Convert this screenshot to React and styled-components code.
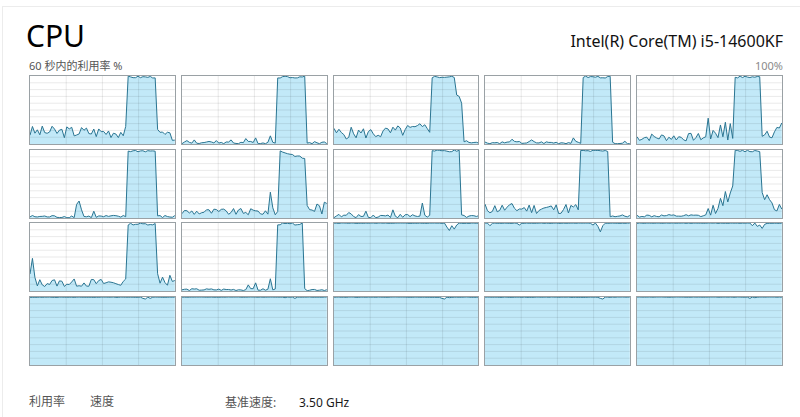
import styled, { createGlobalStyle } from "styled-components";

const GlobalStyle = createGlobalStyle`
  html, body {
    margin: 0;
    padding: 0;
    background: #ffffff;
    overflow: hidden;
  }
  body {
    font-family: "Segoe UI", "Noto Sans", "Noto Sans CJK SC", sans-serif;
    color: #1a1a1a;
  }
`;

const Page = styled.div`
  width: 800px;
  height: 417px;
  padding: 6px 0 0 2px;
  box-sizing: border-box;
  overflow: hidden;
`;

const Panel = styled.div`
  border-top: 1px solid #ececec;
  border-left: 1px solid #ececec;
  background: #ffffff;
  padding: 9px 17px 0 26px;
  height: 100%;
  box-sizing: border-box;
`;

const Header = styled.div`
  display: flex;
  justify-content: space-between;
  align-items: baseline;
  height: 40px;
`;

const Title = styled.h1`
  margin: 0 0 0 -3px;
  font-size: 30px;
  font-weight: 400;
  line-height: 40px;
  color: #000;
`;

const Model = styled.div`
  font-size: 16px;
  line-height: 22px;
  color: #111;
`;

const SubHeader = styled.div`
  display: flex;
  justify-content: space-between;
  font-size: 11px;
  line-height: 14px;
  color: #555;
  margin-top: 3px;
  margin-bottom: 2px;
`;

const Muted = styled.span`
  color: #8a8a8a;
`;

const Grid = styled.div`
  display: grid;
  grid-template-columns: repeat(5, 1fr);
  grid-auto-rows: 70px;
  column-gap: 5px;
  row-gap: 3.7px;
`;

const Cell = styled.div`
  border: 1px solid #9aa1a5;
  background: #ffffff;
  overflow: hidden;

  svg {
    display: block;
    width: 100%;
    height: 100%;
  }
`;

const Stats = styled.div`
  display: flex;
  margin-top: 28px;
`;

const StatBlock = styled.div`
  width: ${(p) => p.w}px;
  flex: none;
`;

const Label = styled.div`
  font-size: 12px;
  line-height: 16px;
  color: #555;
`;

const BigValue = styled.div`
  font-size: 22px;
  line-height: 28px;
  color: #1a1a1a;
`;

const InfoTable = styled.div`
  display: grid;
  grid-template-columns: 74px auto;
  font-size: 12px;
  line-height: 17px;
  color: #555;
`;

const InfoValue = styled.span`
  color: #1a1a1a;
`;

// deterministic noise so the graphs stay the same every render
function rng(seed) {
  let s = seed * 9301 + 49297;
  return () => {
    s = (s * 9301 + 49297) % 233280;
    return s / 233280;
  };
}

const N = 60;

function series(spec, seed) {
  const r = rng(seed);
  const out = [];
  for (let i = 0; i < N; i++) {
    let v;
    if (spec.full) {
      v = 100 - r() * (spec.jitter ?? 0.6);
    } else if (i < spec.hi[0]) {
      let base = spec.base;
      let noise = spec.noise;
      if (spec.ramp && i >= spec.ramp[0]) {
        base += ((i - spec.ramp[0]) / (spec.hi[0] - spec.ramp[0])) * spec.ramp[1];
        noise = spec.rampNoise ?? noise;
      }
      v = base + (r() - 0.5) * 2 * noise;
    } else if (i < spec.hi[1]) {
      v = 97 + r() * 3 - (spec.slope ? ((i - spec.hi[0]) / (spec.hi[1] - spec.hi[0])) * spec.slope : 0);
    } else {
      const t = (i - spec.hi[1]) / (N - spec.hi[1]);
      const post = spec.post * (1 - t * (spec.decay ?? 0));
      v = post + (r() - 0.5) * 2 * (spec.postNoise ?? spec.noise);
    }
    out.push(v);
  }
  (spec.spikes || []).forEach(([i, v]) => (out[i] = v));
  (spec.dips || []).forEach(([i, d]) => (out[i] = 100 - d));
  return out.map((v) => Math.max(0.5, Math.min(100, v)));
}

const specs = [
  { base: 18, noise: 9, hi: [40, 52], post: 16, postNoise: 6, decay: 0.5 },
  { base: 2, noise: 2, hi: [39, 51], post: 2, spikes: [[2, 5], [5, 6], [14, 5], [20, 6], [26, 8], [30, 9], [36, 12]] },
  { base: 16, noise: 9, ramp: [20, 8], hi: [40, 50], post: 3, postNoise: 2, spikes: [[50, 72], [51, 70], [52, 60]] },
  { base: 2, noise: 2, hi: [40, 52], post: 2, spikes: [[11, 7], [19, 6], [36, 9]] },
  { base: 10, noise: 6, hi: [40, 51], post: 20, postNoise: 12, spikes: [[29, 38], [31, 20], [34, 28], [36, 32], [38, 30]] },
  { base: 2, noise: 2, hi: [40, 52], post: 2, spikes: [[19, 20], [20, 25], [21, 12], [26, 10]] },
  { base: 9, noise: 5, hi: [40, 51], post: 15, postNoise: 10, slope: 12, spikes: [[36, 38], [37, 15]] },
  { base: 3, noise: 3, hi: [40, 52], post: 2, spikes: [[6, 8], [13, 10], [24, 12], [36, 22]] },
  { base: 14, noise: 8, hi: [39, 51], post: 3, postNoise: 2 },
  { base: 3, noise: 2, ramp: [28, 40], rampNoise: 10, hi: [40, 51], post: 38, postNoise: 9, decay: 0.8 },
  { base: 12, noise: 6, hi: [40, 52], post: 22, postNoise: 12, decay: 0.4, spikes: [[0, 25], [1, 48], [2, 20]] },
  { base: 2, noise: 1.5, hi: [39, 50], post: 2, spikes: [[27, 9], [30, 12], [36, 18]] },
  { full: true, dips: [[46, 6], [47, 11], [48, 4], [49, 9], [50, 3]] },
  { full: true, dips: [[2, 4], [14, 3], [44, 3], [46, 5], [47, 13], [48, 4]] },
  { full: true, dips: [[47, 4], [49, 5], [50, 3], [51, 8], [52, 2]] },
  { full: true, dips: [[46, 2], [47, 3], [49, 2]] },
  { full: true, jitter: 0.4, dips: [[42, 1], [46, 2]] },
  { full: true, dips: [[44, 2], [45, 3], [47, 1]] },
  { full: true, dips: [[47, 2], [48, 3]] },
  { full: true, jitter: 0.4, dips: [[46, 2], [48, 1]] },
];

const LINE = "#2a7592";
const FILL = "#c2e9f8";
const GRID = "rgba(0, 0, 0, 0.085)";

function CoreGraph({ data }) {
  const pts = data.map((v, i) => `${((i / (N - 1)) * 100).toFixed(2)},${(100 - v).toFixed(2)}`);
  const area = `0,100 ${pts.join(" ")} 100,100`;
  return (
    <Cell>
      <svg viewBox="0 0 100 100" preserveAspectRatio="none">
        <polygon points={area} fill={FILL} />
        {[10, 20, 30, 40, 50, 60, 70, 80, 90].map((y) => (
          <line key={"h" + y} x1="0" x2="100" y1={y} y2={y} stroke={GRID} strokeWidth="1" vectorEffect="non-scaling-stroke" />
        ))}
        {[25, 50, 75].map((x) => (
          <line key={"v" + x} x1={x} x2={x} y1="0" y2="100" stroke={GRID} strokeWidth="1" vectorEffect="non-scaling-stroke" />
        ))}
        <polyline points={pts.join(" ")} fill="none" stroke={LINE} strokeWidth="1" vectorEffect="non-scaling-stroke" />
      </svg>
    </Cell>
  );
}

export default function App() {
  return (
    <Page>
      <GlobalStyle />
      <Panel>
        <Header>
          <Title>CPU</Title>
          <Model>Intel(R) Core(TM) i5-14600KF</Model>
        </Header>
        <SubHeader>
          <span>60 秒内的利用率 %</span>
          <Muted>100%</Muted>
        </SubHeader>
        <Grid>
          {specs.map((s, i) => (
            <CoreGraph key={i} data={series(s, i + 3)} />
          ))}
        </Grid>
        <Stats>
          <StatBlock w={61}>
            <Label>利用率</Label>
            <BigValue>40%</BigValue>
          </StatBlock>
          <StatBlock w={135}>
            <Label>速度</Label>
            <BigValue>2.77 GHz</BigValue>
          </StatBlock>
          <InfoTable>
            <span>基准速度:</span>
            <InfoValue>3.50 GHz</InfoValue>
            <span>插槽:</span>
            <InfoValue>1</InfoValue>
          </InfoTable>
        </Stats>
      </Panel>
    </Page>
  );
}
